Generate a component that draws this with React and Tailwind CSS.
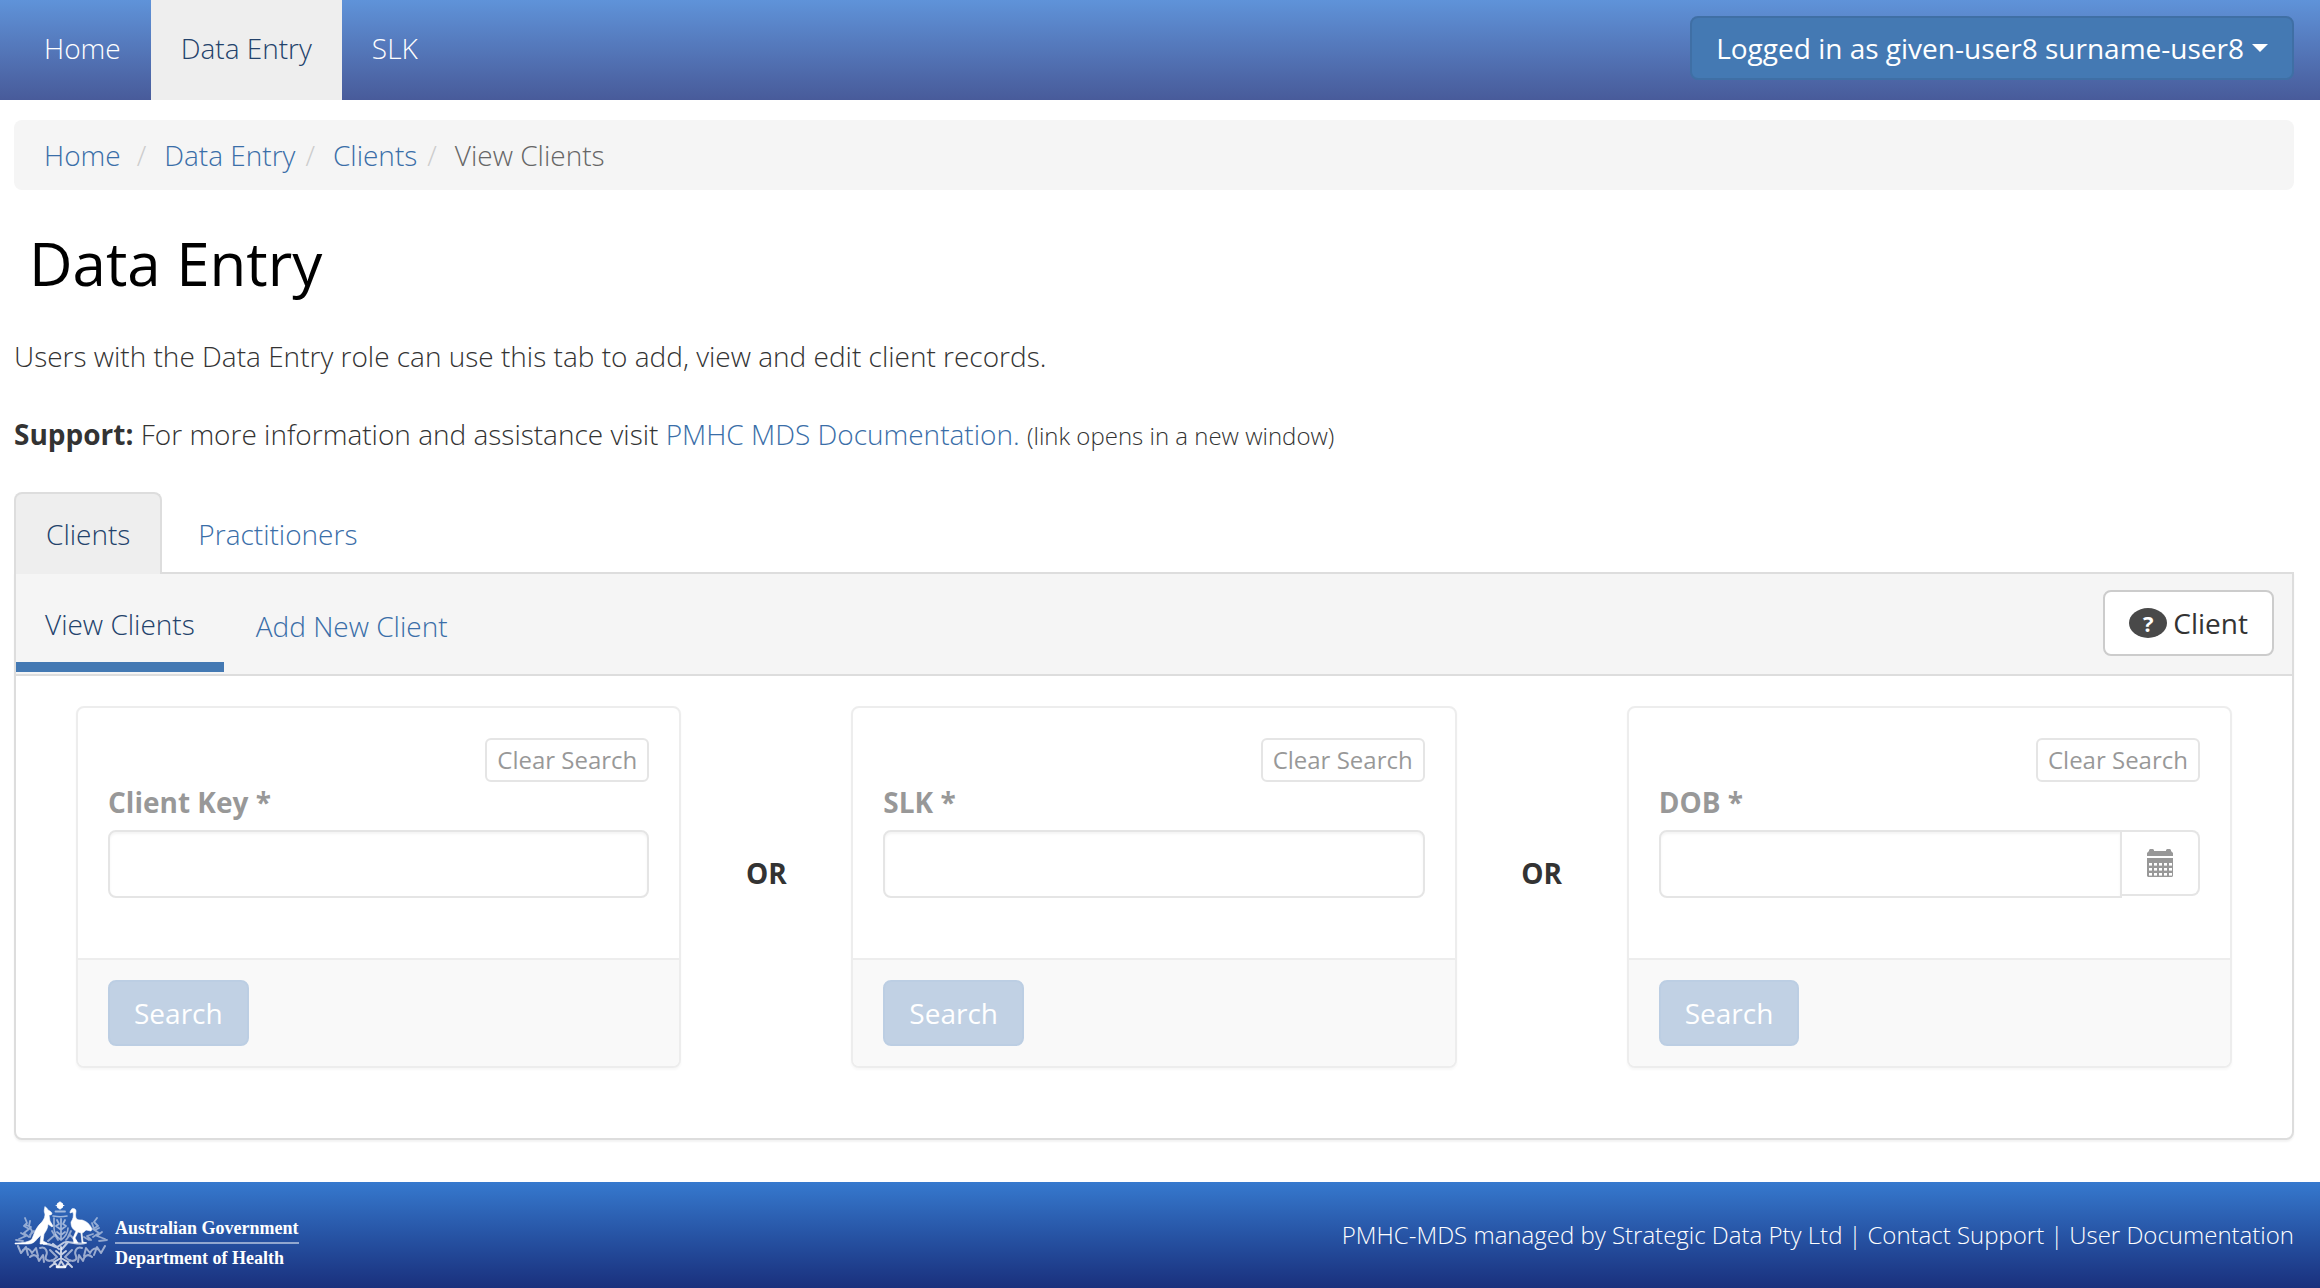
const navLinks = [
  { label: "Home", active: false },
  { label: "Data Entry", active: true },
  { label: "SLK", active: false },
];

function Caret() {
  return (
    <svg className="h-2 w-4" viewBox="0 0 16 8" fill="currentColor" aria-hidden="true">
      <path d="M0 0h16L8 8z" />
    </svg>
  );
}

function HelpIcon() {
  return (
    <span className="flex h-[30px] w-[38px] items-center justify-center rounded-[50%] bg-[#494949] text-[22px] leading-none font-bold text-white">
      ?
    </span>
  );
}

function CalendarIcon() {
  const cols = [2, 7, 12, 17, 22];
  const rows = [14, 19, 24];
  return (
    <svg className="h-7 w-[26px]" viewBox="0 0 26 28" aria-hidden="true">
      <path d="M0 4l2-2V1l1-1h3l1 1v1h12V1l1-1h3l1 1v1l2 2v3H0z" fill="#333" />
      <path d="M0 9h26v18l-1 1H1l-1-1z" fill="#333" />
      {rows.map((y) => cols.map((x) => <rect key={`${x}-${y}`} x={x} y={y} width="3" height="2.6" fill="#fff" />))}
    </svg>
  );
}

function CoatOfArms() {
  return (
    <svg className="h-[68px] w-[94px]" viewBox="0 0 94 68" fill="none" stroke="#fff" strokeLinecap="round" strokeLinejoin="round" aria-hidden="true">
      <circle cx="46" cy="4.5" r="3" fill="#fff" />
      <path d="M46 .5v8M42 4.5h8" strokeWidth="1" opacity=".7" />
      <path d="M41.500 10.500h9.500" strokeWidth="1.800" opacity=".55" />
      <path d="M31 6c1 0 2 1 3 3 2 1 4 2 4 4-1 1-2 1-3 1l1 6 3 5-1 1-4-3c0 4-2 7-4 10l-1 7 4 2v1h-7l1-9-4 4c-2 3-5 5-9 5H1v-1c8 0 14-1 17-4 2-5 3-9 7-14 3-3 6-6 6-11-1-2-1-4 0-7z" fill="#fff" strokeWidth=".6" />
      <path d="M58 8c2-1 4 0 4 2s-1 4 0 7c1 2 3 2 6 2 4 1 8 4 10 9l-1 2-5-1c-2 2-3 3-4 3l1 9 4 1h-5l-1-10-3-1-3 6 3 5h-4l-1-5 3-7c-4-2-5-5-5-9 2-3 3-6 2-10l-3 1c0-2 1-3 2-4z" fill="#fff" strokeWidth=".6" />
      <path d="M39 15c5 1 10 1 14 0M40 17v10c0 6 3 9 7 12 4-3 7-6 7-12" strokeWidth="1.6" opacity=".55" />
      <path d="M43 19l2 4-3 2 4 3M51 19l-2 4 3 2-4 3M43 31l4 3 4-3M47 18v19" strokeWidth="1.8" opacity=".55" />
      <g opacity=".5" strokeWidth="1.8">
        <path d="M11 17l2 5-3 3 5 3-5 4 5 4M16 20l-1 5 3 5-2 6M7 32l5 3-7 3M20 30l-4 4M12 24l5 2" />
        <path d="M83 17l-3 4 4 4-5 3 6 4-6 4M78 22l2 6M88 31l-5 4 8 3M79 33l-6 2 4 4M85 27l-4 2M70 36l5 3" />
        <path d="M2 39l7 1M85 40l8-1M34 40l7-6 3 5M52 39l4-5 6 6M38 30l3 5M57 30l-3 6" />
      </g>
      <path d="M30 43c6-1 8 2 12 3 4 0 6-5 10-5 7 0 12 3 19 1M48 48l6-7M45 48l-6-5" strokeWidth="2.2" opacity=".7" />
      <g opacity=".55" strokeWidth="2">
        <path d="M4 45l3 7 5-6 2 8M9 49c4-3 7-1 9 3l4-5 2 8M16 56c4-4 8-1 9 4l4-6 1 7" />
        <path d="M91 45l-4 7-4-6-3 8M85 49c-4-3-7-1-9 3l-4-5-2 8M78 56c-4-4-8-1-9 4l-4-6-1 7" />
        <path d="M26 47c6-2 8 4 6 8s3 6 6 4M68 47c-6-2-8 4-6 8s-3 6-6 4M36 49l7 7-5 4M58 49l-7 7 5 4" />
      </g>
      <path d="M47 46v12M42 50l5 4 5-4M40 61l7-4 7 4M36 66l5-4 3 4 3-6 4 6 3-4 4 4" strokeWidth="2" opacity=".75" />
      <path d="M43 66h8" strokeWidth="2.6" opacity=".9" />
    </svg>
  );
}

function SearchCard({ id, label, calendar }) {
  return (
    <form className="flex-1 rounded-lg border-2 border-[#ddd] bg-white opacity-50 shadow-[0_2px_2px_rgba(0,0,0,0.05)]">
      <div className="flex flex-col px-[30px] pt-[30px] pb-[60px]">
        <button type="button" className="h-11 self-end rounded-md border-2 border-[#ccc] bg-white px-[10px] text-2xl leading-9 font-normal text-[#333]">
          Clear Search
        </button>
        <label htmlFor={id} className="mb-2 text-[28px] leading-10 font-bold text-[#333]">
          {label} *
        </label>
        <div className="flex items-start">
          <input
            id={id}
            type="text"
            className={
              "h-[68px] min-w-0 flex-1 border-2 border-[#ccc] bg-white px-6 text-[28px] shadow-[inset_0_2px_2px_rgba(0,0,0,0.075)] " +
              (calendar ? "rounded-l-lg" : "rounded-lg")
            }
          />
          {calendar && (
            <button type="button" aria-label="Choose date" className="flex h-[66px] w-[78px] items-center justify-center rounded-r-lg border-2 border-l-0 border-[#ccc] bg-white">
              <CalendarIcon />
            </button>
          )}
        </div>
      </div>
      <div className="rounded-b-md border-t-2 border-[#ddd] bg-[#f5f5f5] px-[30px] py-5">
        <button type="submit" className="block h-[66px] rounded-lg border-2 border-[#7b9fc9] bg-[#84a4ca] px-6 text-[28px] leading-10 font-normal text-white">
          Search
        </button>
      </div>
    </form>
  );
}

function Or() {
  return <div className="w-[170px] shrink-0 pb-7 text-center text-[28px] leading-10 font-bold">OR</div>;
}

export default function App() {
  return (
    <div className="flex min-h-screen flex-col bg-white font-['Open_Sans',sans-serif] text-[28px] leading-10 font-light text-[#333]">
      <nav className="flex h-[100px] items-start justify-between bg-linear-to-b from-[#5f93d9] to-[#485b9a] pr-[26px] pl-[14px]">
        <div className="flex h-full">
          {navLinks.map((l) => (
            <a
              key={l.label}
              href="#"
              className={"px-[30px] pt-7 " + (l.active ? "bg-[#eee] text-[#23426b]" : "text-white")}
            >
              {l.label}
            </a>
          ))}
        </div>
        <button type="button" className="mt-4 flex h-16 items-center gap-2 rounded-lg border-2 border-[#3f6fa5] bg-[#4479b3] px-6 font-normal text-white">
          Logged in as given-user8 surname-user8
          <Caret />
        </button>
      </nav>

      <main className="flex flex-col pt-5 pr-[26px] pb-[42px] pl-[14px]">
        <ol className="flex h-[70px] items-center rounded-lg bg-[#f5f5f5] px-[30px]">
          <li><a href="#" className="text-[#3a6ea8]">Home</a></li>
          <li className="pr-[18px] pl-4 text-[#ccc]">/</li>
          <li><a href="#" className="text-[#3a6ea8]">Data Entry</a></li>
          <li className="pr-[18px] pl-[10px] text-[#ccc]">/</li>
          <li><a href="#" className="text-[#3a6ea8]">Clients</a></li>
          <li className="pr-[18px] pl-[10px] text-[#ccc]">/</li>
          <li className="text-[#666]">View Clients</li>
        </ol>

        <h1 className="mt-10 px-[15px] text-[60px] leading-[66px] font-normal text-black">Data Entry</h1>
        <p className="mt-10">Users with the Data Entry role can use this tab to add, view and edit client records.</p>
        <p className="mt-[38px]">
          <strong className="font-bold">Support:</strong> For more information and assistance visit{" "}
          <a href="#" className="text-[#3a6ea8]">PMHC MDS Documentation.</a>{" "}
          <small className="text-2xl leading-none">(link opens in a new window)</small>
        </p>

        <div className="mt-[38px] flex">
          <a href="#" className="relative z-10 -mb-[2px] h-[82px] rounded-t-lg border-2 border-b-0 border-[#ddd] bg-[#eee] px-[30px] pt-5 text-[#23426b]">
            Clients
          </a>
          <a href="#" className="ml-1 px-8 pt-[22px] text-[#3a6ea8]">Practitioners</a>
        </div>

        <section className="rounded-b-lg border-2 border-[#ddd] bg-white shadow-[0_2px_2px_rgba(0,0,0,0.05)]">
          <div className="flex h-[102px] border-b-2 border-[#ddd] bg-[#f5f5f5] pr-[18px]">
            <a href="#" className="h-[98px] border-b-10 border-[#4479b3] px-[29px] pt-[30px] text-[#23426b]">View Clients</a>
            <a href="#" className="px-8 pt-8 text-[#3a6ea8]">Add New Client</a>
            <button type="button" className="mt-4 ml-auto flex h-[66px] items-center gap-[6px] rounded-lg border-2 border-[#ccc] bg-white px-6 font-normal text-[#333]">
              <HelpIcon />
              Client
            </button>
          </div>
          <div className="flex items-center px-[60px] pt-[30px] pb-[70px]">
            <SearchCard id="client-key" label="Client Key" />
            <Or />
            <SearchCard id="slk" label="SLK" />
            <Or />
            <SearchCard id="dob" label="DOB" calendar />
          </div>
        </section>
      </main>

      <footer className="flex h-[106px] items-center justify-between bg-linear-to-b from-[#3679ce] to-[#1a307d] pr-[26px] pl-[14px] text-2xl text-white">
        <div className="flex items-center gap-[7px]">
          <CoatOfArms />
          <div className="pt-4 font-['Liberation_Serif',serif] text-[18px] leading-7 font-bold">
            <div className="border-b-2 border-white/50">Australian Government</div>
            <div>Department of Health</div>
          </div>
        </div>
        <div className="flex gap-[6px]">
          <a href="#">PMHC-MDS managed by Strategic Data Pty Ltd</a>
          <span>|</span>
          <a href="#">Contact Support</a>
          <span>|</span>
          <a href="#">User Documentation</a>
        </div>
      </footer>
    </div>
  );
}
